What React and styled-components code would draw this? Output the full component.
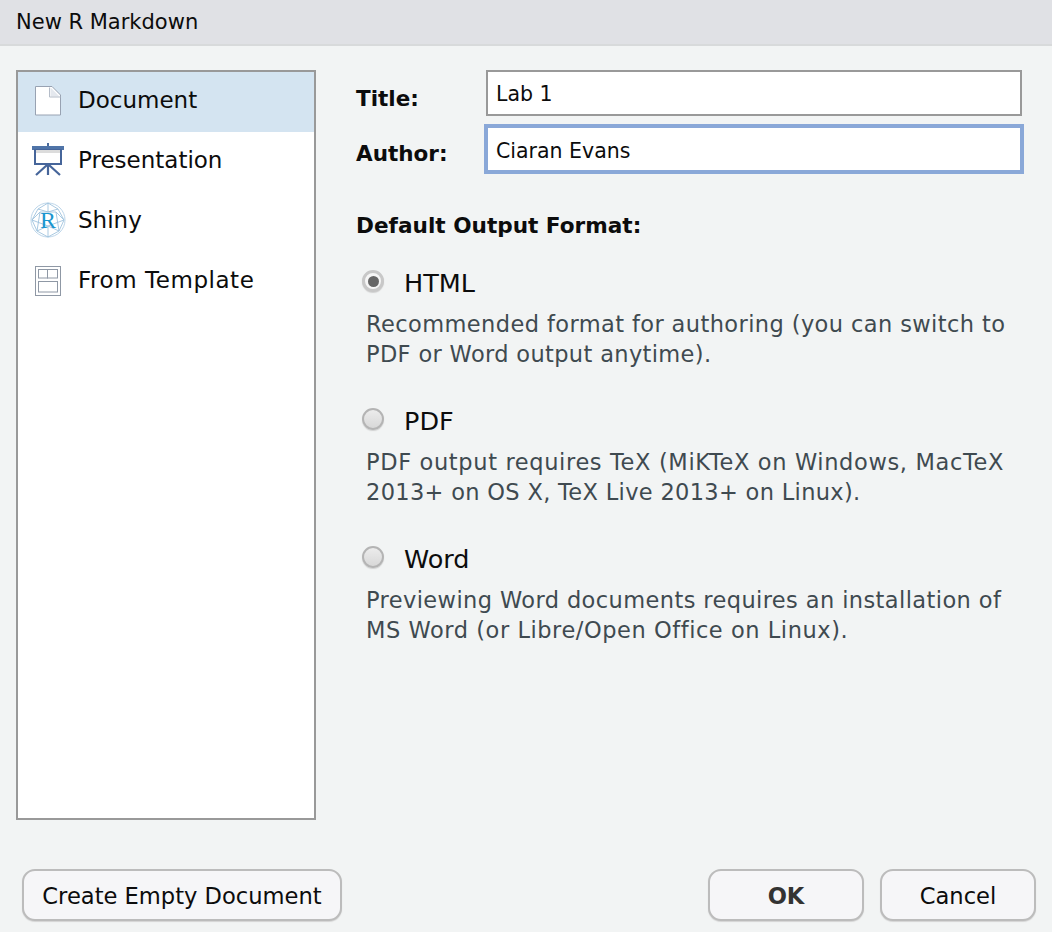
import React from 'react'
import styled, { createGlobalStyle } from 'styled-components'

const GlobalStyle = createGlobalStyle`
    html, body {
        margin: 0;
        padding: 0;
        background: #f2f4f4;
    }
    body {
        font-family: "DejaVu Sans", "Liberation Sans", sans-serif;
        color: #0c0c0c;
    }
`

const Dialog = styled.div`
    width: 1052px;
    height: 932px;
    display: flex;
    flex-direction: column;
    overflow: hidden;
    background: #f2f4f4;
`

const TitleBar = styled.header`
    height: 46px;
    flex: none;
    box-sizing: border-box;
    padding-left: 16px;
    display: flex;
    align-items: center;
    background: #e0e1e5;
    border-bottom: 2px solid #d8dadb;
    font-size: 21px;
`

const Body = styled.main`
    flex: 1;
    display: flex;
    padding: 24px 28px 0 16px;
    gap: 40px;
    min-height: 0;
`

const TypeList = styled.ul`
    width: 300px;
    height: 750px;
    flex: none;
    box-sizing: border-box;
    margin: 0;
    padding: 0;
    list-style: none;
    background: #fff;
    border: 2px solid #999;
`

const TypeRow = styled.li`
    height: 60px;
    box-sizing: border-box;
    padding-bottom: 4px;
    display: flex;
    align-items: center;
    background: ${props => (props.selected ? '#d4e4f1' : 'transparent')};
    font-size: 23px;
    letter-spacing: ${props => props.tracking || 0}px;
`

const TypeIcon = styled.span`
    width: 60px;
    flex: none;
    display: flex;
    justify-content: center;
    align-items: center;
`

const Form = styled.section`
    flex: 1;
    min-width: 0;
`

const Field = styled.div`
    display: flex;
    align-items: center;
    height: ${props => props.height}px;
    margin-bottom: ${props => props.gap || 0}px;
    padding-right: ${props => props.inset || 0}px;
`

const FieldLabel = styled.label`
    width: ${props => props.width}px;
    flex: none;
    font-size: 21.5px;
    font-weight: bold;
    padding-top: ${props => props.drop}px;
`

const TextBox = styled.div`
    flex: 1;
    box-sizing: border-box;
    height: 100%;
    display: flex;
    align-items: center;
    background: #fff;
    padding: ${props => (props.focused ? '4px 0 0 8px' : '2px 0 0 8px')};
    border: ${props => (props.focused ? '4px solid #8aa8d8' : '2px solid #999')};
    font-size: 20.5px;
`

const SectionTitle = styled.h2`
    margin: 37px 0 0;
    font-size: 21.6px;
    font-weight: bold;
    line-height: 30px;
`

const FormatList = styled.div`
    margin-top: 27px;
    display: flex;
    flex-direction: column;
    gap: 37px;
`

const FormatHead = styled.div`
    display: flex;
    align-items: center;
    height: 30px;
    font-size: 25.5px;
`

const Radio = styled.span`
    width: 22px;
    height: 22px;
    flex: none;
    box-sizing: border-box;
    margin: 0 20px 4px 6px;
    border-radius: 50%;
    display: flex;
    align-items: center;
    justify-content: center;
    border: ${props => (props.checked ? '3px solid #c8c8c8' : '2px solid #b4b4b4')};
    background: ${props => (props.checked ? '#f6f6f6' : 'linear-gradient(#ececec, #d8d8d8)')};
    box-shadow: 0 1px 1px #d0d0d0;

    &::after {
        content: '';
        width: 11px;
        height: 11px;
        border-radius: 50%;
        background: ${props => (props.checked ? '#666' : 'transparent')};
    }
`

const FormatHelp = styled.div`
    margin: 11px 0 0 10px;
`

const HelpLine = styled.div`
    font-size: 22.5px;
    letter-spacing: ${props => 0.4 + props.tracking}px;
    line-height: 30px;
    color: #3f4a50;
    white-space: nowrap;
`

const Footer = styled.footer`
    flex: none;
    display: flex;
    align-items: flex-end;
    padding: 0 16px 11px 22px;
`

const Button = styled.button`
    box-sizing: border-box;
    width: ${props => props.width}px;
    height: 52px;
    margin-left: ${props => props.offset || 0}px;
    padding: 2px 0 0;
    background: #f6f6f8;
    border: 2px solid #bcbcbc;
    border-radius: 13px;
    box-shadow: 0 1px 1px #d4d4d4;
    font-family: inherit;
    font-size: 22.6px;
    font-weight: ${props => (props.primary ? 'bold' : 'normal')};
    color: ${props => (props.primary ? '#333' : '#0c0c0c')};
`

const Spacer = styled.div`
    flex: 1;
`

const DocumentIcon = () => (
    <svg width="28" height="32" viewBox="0 0 28 32">
        <path d="M1.5 2.5h16.5l8.5 8.5v20h-25z" fill="#fff" stroke="#98a2b2" strokeLinejoin="round" />
        <path d="M16.5 3.5v9h9z" fill="#e4e8ee" />
        <path d="M15.5 3.5v9.5h11" fill="none" stroke="#b4bcc8" />
    </svg>
)

const PresentationIcon = () => (
    <svg width="34" height="34" viewBox="0 0 34 34">
        <rect x="16" y="0" width="2" height="3" fill="#4a6b9c" />
        <rect x="1" y="3" width="32" height="4" fill="#4f74a8" />
        <rect x="4" y="7" width="26" height="14" fill="#fff" stroke="#46659a" strokeWidth="2" />
        <rect x="5" y="7" width="24" height="3" fill="#dcdcdc" />
        <path d="M17 21v11M16 22L5 32M18 22l11 10" stroke="#46659a" strokeWidth="2.2" fill="none" />
    </svg>
)

const ShinyIcon = () => (
    <svg width="36" height="38" viewBox="0 0 36 38">
        <g fill="none" stroke="#9fc3de" strokeWidth="0.9">
            <circle cx="18" cy="19" r="17" stroke="#b4d0e6" />
            <path d="M18 2L8 8 2 19l5 11 11 6 11-6 5-11-6-11zM8 8l10 3 10-3M2 19l8-8h16l8 8M7 30l3-19M29 30l-3-19M7 30l11-5 11 5M18 36v-11M2 19l16 6 16-6M18 2v9" />
        </g>
        <text x="18" y="27" textAnchor="middle" fontFamily="'Liberation Serif', serif" fontSize="24" fill="#1a96cf">R</text>
    </svg>
)

const TemplateIcon = () => (
    <svg width="26" height="32" viewBox="0 -2 26 32">
        <g fill="#fff" stroke="#8f98a5" strokeWidth="1">
            <rect x="0.5" y="0.5" width="25" height="29" />
            <rect x="3.5" y="3.5" width="9" height="8.5" />
            <rect x="12.5" y="3.5" width="10" height="8.5" />
            <rect x="3.5" y="15.5" width="19" height="10.5" />
        </g>
    </svg>
)

const types = [
    { label: 'Document', icon: <DocumentIcon />, selected: true },
    { label: 'Presentation', icon: <PresentationIcon /> },
    { label: 'Shiny', icon: <ShinyIcon /> },
    { label: 'From Template', icon: <TemplateIcon />, tracking: 0.55 },
]

// tracking evens out the line widths against the mac font of the original
const formats = [
    {
        name: 'HTML',
        checked: true,
        help: [
            { text: 'Recommended format for authoring (you can switch to', tracking: 0 },
            { text: 'PDF or Word output anytime).', tracking: -0.05 },
        ],
    },
    {
        name: 'PDF',
        help: [
            { text: 'PDF output requires TeX (MiKTeX on Windows, MacTeX', tracking: 0.24 },
            { text: '2013+ on OS X, TeX Live 2013+ on Linux).', tracking: -0.08 },
        ],
    },
    {
        name: 'Word',
        help: [
            { text: 'Previewing Word documents requires an installation of', tracking: 0 },
            { text: 'MS Word (or Libre/Open Office on Linux).', tracking: 0.15 },
        ],
    },
]

const App = () => (
    <Dialog>
        <GlobalStyle />
        <TitleBar>New R Markdown</TitleBar>
        <Body>
            <TypeList>
                {types.map(type => (
                    <TypeRow key={type.label} selected={type.selected} tracking={type.tracking}>
                        <TypeIcon>{type.icon}</TypeIcon>
                        {type.label}
                    </TypeRow>
                ))}
            </TypeList>
            <Form>
                <Field height={46} gap={8} inset={2}>
                    <FieldLabel width={130} drop={11}>Title:</FieldLabel>
                    <TextBox>Lab 1</TextBox>
                </Field>
                <Field height={50}>
                    <FieldLabel width={128} drop={9}>Author:</FieldLabel>
                    <TextBox focused>Ciaran Evans</TextBox>
                </Field>
                <SectionTitle>Default Output Format:</SectionTitle>
                <FormatList>
                    {formats.map(format => (
                        <div key={format.name}>
                            <FormatHead>
                                <Radio checked={format.checked} />
                                {format.name}
                            </FormatHead>
                            <FormatHelp>
                                {format.help.map(line => (
                                    <HelpLine key={line.text} tracking={line.tracking}>{line.text}</HelpLine>
                                ))}
                            </FormatHelp>
                        </div>
                    ))}
                </FormatList>
            </Form>
        </Body>
        <Footer>
            <Button width={320}>Create Empty Document</Button>
            <Spacer />
            <Button width={156} primary>OK</Button>
            <Button width={156} offset={16}>Cancel</Button>
        </Footer>
    </Dialog>
)

export default App
